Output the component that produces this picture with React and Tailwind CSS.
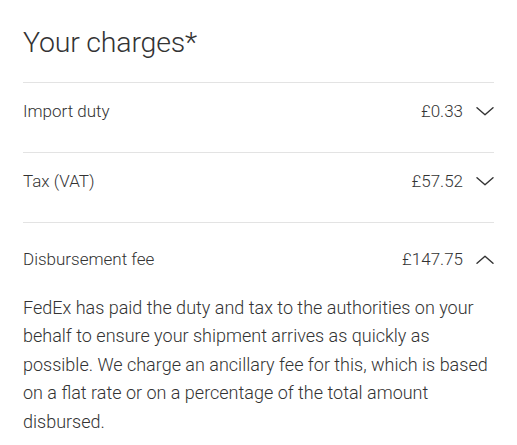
import React from "react";

const Chevron = ({ up }) => (
  <svg width="18" height="9" viewBox="0 0 18 9" fill="none" className="shrink-0">
    <path
      d={up ? "M1 8.2L9 1.2L17 8.2" : "M1 0.8L9 7.8L17 0.8"}
      stroke="#333"
      strokeWidth="1.4"
      strokeLinecap="round"
      strokeLinejoin="round"
    />
  </svg>
);

const charges = [
  { label: "Import duty", amount: "£0.33" },
  { label: "Tax (VAT)", amount: "£57.52" },
  { label: "Disbursement fee", amount: "£147.75", open: true },
];

export default function App() {
  return (
    <div
      className="w-[517px] h-[445px] overflow-hidden bg-white text-[#333] px-[23px] pt-[25px]"
      style={{ fontFamily: "Roboto, 'Liberation Sans', sans-serif" }}
    >
      <h1 className="text-[28.5px] leading-[36px] font-light tracking-[-0.2px] h-[57px]">Your charges*</h1>

      {charges.map((c) => (
        <div key={c.label} className="border-t border-[#e3e3e3]">
          <div
            className={
              c.open
                ? "flex items-center justify-between pt-[24px] pb-[23px] text-[17px] leading-[24px]"
                : "flex items-center justify-between pt-[16px] pb-[29px] text-[17px] leading-[24px]"
            }
          >
            <span className="font-light">{c.label}</span>
            <div className="flex items-center gap-[13px]">
              <span className="font-light">{c.amount}</span>
              <Chevron up={c.open} />
            </div>
          </div>
          {c.open && (
            <p className="text-[18px] leading-[28.4px] font-light">
              FedEx has paid the duty and tax to the authorities on your behalf to ensure your shipment arrives as quickly as possible. We charge an ancillary fee for this, which is based on a flat rate or on a percentage of the total amount disbursed.
            </p>
          )}
        </div>
      ))}
    </div>
  );
}
